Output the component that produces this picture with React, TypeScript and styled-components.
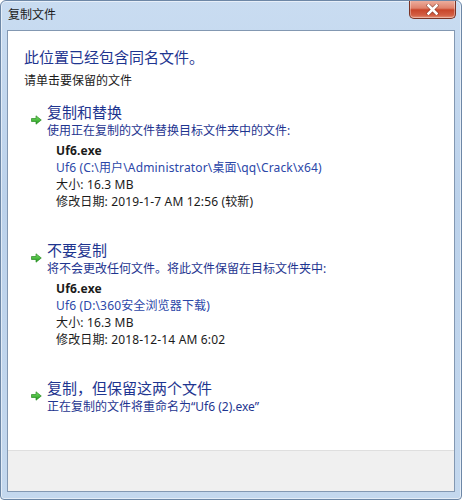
import React from "react";
import styled, { createGlobalStyle } from "styled-components";

const GlobalStyle = createGlobalStyle`
  html, body {
    margin: 0;
    padding: 0;
    background: #ffffff;
  }
  body {
    font-family: "Noto Sans", "Noto Sans CJK SC", sans-serif;
  }
`;

const Frame = styled.div`
  width: 462px;
  height: 500px;
  box-sizing: border-box;
  display: flex;
  flex-direction: column;
  border: 1px solid #6d87a6;
  border-radius: 6px 6px 4px 4px;
  background: linear-gradient(180deg, #c9dcf1 0%, #bcd2eb 40%, #c4d8ee 100%);
  box-shadow: inset 0 0 0 1px rgba(255, 255, 255, 0.55);
  overflow: hidden;
`;

const TitleBar = styled.div`
  height: 29px;
  display: flex;
  align-items: flex-start;
  justify-content: space-between;
  padding-left: 7px;
  flex-shrink: 0;
`;

const TitleText = styled.span`
  margin-top: 6px;
  font-size: 12px;
  line-height: 16px;
  color: #1b1b1b;
`;

const CloseButton = styled.div`
  width: 47px;
  height: 19px;
  margin-right: 5px;
  margin-top: -1px;
  box-sizing: border-box;
  border: 1px solid #7a3325;
  border-top: none;
  border-radius: 0 0 5px 5px;
  background: linear-gradient(180deg, #eeb3a3 0%, #df826c 45%, #c8452a 55%, #d35f44 85%, #e5957a 100%);
  box-shadow: inset 0 0 0 1px rgba(255, 255, 255, 0.35);
  display: flex;
  align-items: center;
  justify-content: center;
`;

const Client = styled.div`
  flex: 1;
  margin: 0 6px 7px 6px;
  border: 1px solid #8398b2;
  background: #ffffff;
  display: flex;
  flex-direction: column;
`;

const Content = styled.div`
  flex: 1;
  padding: 16px 0 0 16px;
  display: flex;
  flex-direction: column;
`;

const Heading = styled.div`
  font-size: 15px;
  line-height: 20px;
  color: #1e3590;
`;

const SubHeading = styled.div`
  margin-top: 5px;
  font-size: 12px;
  line-height: 18px;
  color: #1b1b1b;
`;

const Option = styled.div<{ $gap: number }>`
  margin-top: ${({ $gap }) => $gap}px;
  display: grid;
  grid-template-columns: 16px 1fr;
  padding-left: 7px;
`;

const ArrowCell = styled.div`
  padding-top: 6px;
`;

const OptionBody = styled.div`
  display: flex;
  flex-direction: column;
`;

const OptionTitle = styled.div`
  font-size: 15px;
  line-height: 20px;
  color: #1e3590;
`;

const OptionDesc = styled.div`
  font-size: 12px;
  line-height: 17px;
  color: #1e3590;
`;

const FileInfo = styled.div`
  margin-top: 3px;
  padding-left: 9px;
  display: flex;
  flex-direction: column;
`;

const InfoLine = styled.div<{ $tone?: "name" | "path" | "plain" }>`
  font-size: 12px;
  line-height: 17px;
  color: ${({ $tone }) => ($tone === "path" ? "#2c47a8" : "#1b1b1b")};
  font-weight: ${({ $tone }) => ($tone === "name" ? 700 : 400)};
  letter-spacing: 0.15px;
  white-space: nowrap;
`;

const Footer = styled.div`
  height: 40px;
  flex-shrink: 0;
  background: #f0f0f0;
  border-top: 1px solid #dfdfdf;
`;

const GreenArrow: React.FC = () => (
  <svg width="11" height="10" viewBox="0 0 11 10">
    <defs>
      <linearGradient id="ga" x1="0" y1="0" x2="0" y2="1">
        <stop offset="0" stopColor="#7ee06a" />
        <stop offset="1" stopColor="#1d9a1a" />
      </linearGradient>
    </defs>
    <path
      d="M0.5 3.5 H5 V0.8 L10.3 5 L5 9.2 V6.5 H0.5 Z"
      fill="url(#ga)"
      stroke="#2a8a22"
      strokeWidth="0.7"
      strokeLinejoin="round"
    />
  </svg>
);

const CloseGlyph: React.FC = () => (
  <svg width="13" height="11" viewBox="0 0 13 11">
    <path
      d="M2.5 1.5 L10.5 9.5 M10.5 1.5 L2.5 9.5"
      stroke="#5a1e14"
      strokeWidth="4"
      strokeLinecap="square"
      opacity="0.5"
    />
    <path
      d="M2.5 1.5 L10.5 9.5 M10.5 1.5 L2.5 9.5"
      stroke="#ffffff"
      strokeWidth="2.6"
      strokeLinecap="square"
    />
  </svg>
);

interface FileDetails {
  name: string;
  path: string;
  size: string;
  date: string;
}

const options: {
  title: string;
  desc: string;
  gap: number;
  file?: FileDetails;
}[] = [
  {
    title: "复制和替换",
    desc: "使用正在复制的文件替换目标文件夹中的文件:",
    gap: 12,
    file: {
      name: "Uf6.exe",
      path: "Uf6 (C:\\用户\\Administrator\\桌面\\qq\\Crack\\x64)",
      size: "大小: 16.3 MB",
      date: "修改日期: 2019-1-7 AM 12:56 (较新)",
    },
  },
  {
    title: "不要复制",
    desc: "将不会更改任何文件。将此文件保留在目标文件夹中:",
    gap: 30,
    file: {
      name: "Uf6.exe",
      path: "Uf6 (D:\\360安全浏览器下载)",
      size: "大小: 16.3 MB",
      date: "修改日期: 2018-12-14 AM 6:02",
    },
  },
  {
    title: "复制，但保留这两个文件",
    desc: "正在复制的文件将重命名为“Uf6 (2).exe”",
    gap: 30,
  },
];

const App: React.FC = () => {
  return (
    <>
      <GlobalStyle />
      <Frame>
        <TitleBar>
          <TitleText>复制文件</TitleText>
          <CloseButton>
            <CloseGlyph />
          </CloseButton>
        </TitleBar>
        <Client>
          <Content>
            <Heading>此位置已经包含同名文件。</Heading>
            <SubHeading>请单击要保留的文件</SubHeading>
            {options.map((o) => (
              <Option key={o.title} $gap={o.gap}>
                <ArrowCell>
                  <GreenArrow />
                </ArrowCell>
                <OptionBody>
                  <OptionTitle>{o.title}</OptionTitle>
                  <OptionDesc>{o.desc}</OptionDesc>
                  {o.file && (
                    <FileInfo>
                      <InfoLine $tone="name">{o.file.name}</InfoLine>
                      <InfoLine $tone="path">{o.file.path}</InfoLine>
                      <InfoLine>{o.file.size}</InfoLine>
                      <InfoLine>{o.file.date}</InfoLine>
                    </FileInfo>
                  )}
                </OptionBody>
              </Option>
            ))}
          </Content>
          <Footer />
        </Client>
      </Frame>
    </>
  );
};

export default App;
